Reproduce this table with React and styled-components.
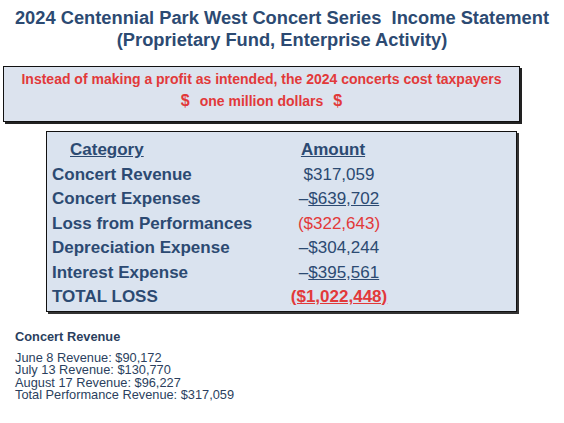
import React from "react";
import styled, { createGlobalStyle } from "styled-components";

const GlobalStyle = createGlobalStyle`
  html, body {
    margin: 0;
    padding: 0;
    background: #ffffff;
    font-family: "Liberation Sans", Arial, sans-serif;
  }
`;

const Page = styled.div`
  width: 564px;
  height: 423px;
  overflow: hidden;
  padding-top: 7px;
  box-sizing: border-box;
`;

const Title = styled.h1`
  margin: 0;
  text-align: center;
  font-size: 18.3px;
  line-height: 22px;
  font-weight: bold;
  color: #2c4a72;
`;

const Banner = styled.div`
  margin: 15px 0 0 3px;
  width: 515px;
  padding: 2px 0 9px;
  background: #dce3ee;
  border: 1.5px solid #111;
  box-shadow: 2px 2px 0 #222;
  text-align: center;
  color: #e2393a;
  font-size: 14px;
  font-weight: bold;
  line-height: 21px;

  .dollar {
    font-size: 16px;
    margin: 0 6px;
  }
`;

const TableBox = styled.div`
  margin: 9px 0 0 46px;
  width: 471px;
  height: 181px;
  padding: 6px 0 0 5px;
  box-sizing: border-box;
  background: #dae3ef;
  border: 1.5px solid #111;
  box-shadow: 2px 2px 0 #333;
  display: grid;
  grid-template-columns: 232px 110px;
  grid-auto-rows: 24.5px;
  align-items: center;
  font-size: 17px;
  color: #2c4a72;
`;

const Label = styled.div`
  font-weight: bold;
  padding-left: ${(p) => (p.$header ? "18px" : "0")};
  text-decoration: ${(p) => (p.$header ? "underline" : "none")};
`;

const Amount = styled.div`
  text-align: center;
  white-space: nowrap;
  color: ${(p) => (p.$red ? "#e2393a" : "#2c4a72")};
  font-weight: ${(p) => (p.$bold ? "bold" : "normal")};
  text-decoration: ${(p) => (p.$under ? "underline" : "none")};
  padding-right: ${(p) => (p.$header ? "12px" : "0")};

  u {
    text-decoration: underline;
  }
`;

const Notes = styled.div`
  margin: 17px 0 0 15px;
  color: #2b3f5e;
  font-size: 12.8px;
`;

const NotesHead = styled.div`
  font-weight: bold;
  line-height: 15px;
  margin-bottom: 8px;
`;

const NoteLine = styled.div`
  line-height: 12.4px;
`;

const NextHead = styled.div`
  margin-top: 22px;
  font-weight: bold;
  color: #9fb4d0;
`;

export default function App() {
  return (
    <Page>
      <GlobalStyle />
      <Title>
        2024 Centennial Park West Concert Series&nbsp; Income Statement
        <br />
        (Proprietary Fund, Enterprise Activity)
      </Title>
      <Banner>
        Instead of making a profit as intended, the 2024 concerts cost taxpayers
        <br />
        <span className="dollar">$</span> one million dollars{" "}
        <span className="dollar">$</span>
      </Banner>
      <TableBox>
        <Label $header>Category</Label>
        <Amount $header $bold $under>Amount</Amount>

        <Label>Concert Revenue</Label>
        <Amount>$317,059</Amount>

        <Label>Concert Expenses</Label>
        <Amount>–<u>$639,702</u></Amount>

        <Label>Loss from Performances</Label>
        <Amount $red>($322,643)</Amount>

        <Label>Depreciation Expense</Label>
        <Amount>–$304,244</Amount>

        <Label>Interest Expense</Label>
        <Amount>–<u>$395,561</u></Amount>

        <Label>TOTAL LOSS</Label>
        <Amount $red $bold $under>($1,022,448)</Amount>
      </TableBox>
      <Notes>
        <NotesHead>Concert Revenue</NotesHead>
        <NoteLine>June 8 Revenue: $90,172</NoteLine>
        <NoteLine>July 13 Revenue: $130,770</NoteLine>
        <NoteLine>August 17 Revenue: $96,227</NoteLine>
        <NoteLine>Total Performance Revenue: $317,059</NoteLine>
        <NextHead>Concert Expenses</NextHead>
      </Notes>
    </Page>
  );
}
